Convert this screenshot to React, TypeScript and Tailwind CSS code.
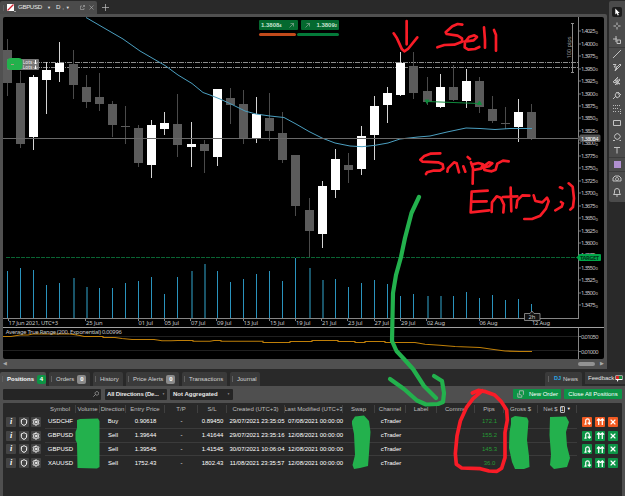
import type { ReactNode } from 'react';
import { Settings, Shield, X } from 'lucide-react';

type Candle = [high: number, top: number, bottom: number, low: number, up: 0 | 1];

const candles: Candle[] = [
  [39, 50, 83, 96, 0],
  [71, 83, 144, 148, 0],
  [75, 77, 137, 150, 1],
  [62, 70, 80, 114, 1],
  [42, 63, 72, 82, 1],
  [50, 64, 85, 99, 0],
  [75, 87, 102, 108, 0],
  [73, 97, 104, 111, 0],
  [101, 104, 125, 137, 0],
  [106, 126, 127, 144, 0],
  [125, 128, 163, 167, 0],
  [120, 125, 165, 178, 1],
  [112, 123, 129, 135, 1],
  [94, 124, 145, 157, 0],
  [122, 144, 147, 167, 1],
  [140, 144, 151, 173, 0],
  [89, 89, 157, 166, 1],
  [88, 98, 105, 124, 0],
  [90, 104, 139, 144, 0],
  [97, 114, 139, 143, 1],
  [93, 118, 131, 141, 0],
  [112, 133, 160, 163, 0],
  [155, 155, 206, 216, 0],
  [198, 210, 231, 257, 0],
  [181, 186, 234, 248, 1],
  [149, 159, 190, 198, 1],
  [153, 165, 170, 183, 0],
  [126, 136, 169, 175, 1],
  [96, 106, 135, 160, 1],
  [87, 93, 105, 123, 1],
  [52, 63, 95, 96, 1],
  [52, 66, 93, 99, 0],
  [77, 91, 102, 105, 0],
  [74, 87, 107, 108, 1],
  [65, 87, 100, 101, 0],
  [69, 81, 101, 108, 1],
  [77, 81, 107, 113, 0],
  [96, 109, 121, 123, 0],
  [107, 123, 124, 129, 0],
  [99, 112, 127, 142, 1],
  [104, 112, 139, 140, 0],
];

const volumes = [
  271, 268, 270, 285, 283, 278, 287, 288, 288, 283, 281, 277, 294, 277, 271, 264, 271, 282, 279,
  274, 271, 281, 258, 268, 280, 279, 287, 283, 280, 284, 296, 294, 296, 296, 296, 292, 298, 295,
  300, 299, 304,
];
const dimVolumes = [5, 6, 14, 15, 23, 24, 32, 33];

const dates: [number, string, number][] = [
  [8.5, '17 Jun 2021, UTC+3', 49.5],
  [86, '25 Jun', 16.5],
  [138.5, '01 Jul', 14.5],
  [164.5, '05 Jul', 14.5],
  [191, '07 Jul', 14.5],
  [217, '09 Jul', 14.5],
  [243.5, '13 Jul', 14.5],
  [270, '15 Jul', 14.5],
  [296, '19 Jul', 14.5],
  [322, '21 Jul', 14.5],
  [348, '23 Jul', 14.5],
  [374.5, '27 Jul', 14.5],
  [401, '29 Jul', 14.5],
  [427, '02 Aug', 18],
  [479.5, '06 Aug', 18],
  [532, '12 Aug', 18],
];

const candleX = (i: number) => 7.5 + i * 13.11;

const Chart = () => (
  <svg
    width="601"
    height="342"
    viewBox="3 17 601 342"
    className="block bg-black"
    fontFamily='"Noto Sans", sans-serif'
    fontSize="5.8"
    fill="#c9c9c9"
  >
    {/* order lines */}
    <path d="M3 62.5H578M3 67.5H578" stroke="#8c8c8c" strokeDasharray="5 1 1 1" fill="none" />
    <path d="M6 257.5H578" stroke="#0a6433" strokeDasharray="4 1" />

    {volumes.map((y, i) => (
      <rect
        key={i}
        x={Math.round(candleX(i) - 0.5)}
        y={y}
        width={dimVolumes.includes(i) ? 2 : 1}
        height={318 - y}
        fill={dimVolumes.includes(i) ? '#195468' : '#2a93bd'}
      />
    ))}

    {candles.map(([high, top, bottom, low, up], i) => {
      const x = Math.round(candleX(i) - 0.5);
      return (
        <g key={i} fill={up ? '#ffffff' : '#5b5b5b'}>
          <rect x={x} y={high} width="1" height={low - high} fill={up ? '#d4d4d4' : '#4a4a4a'} />
          <rect x={x - 4} y={top} width="9" height={bottom - top} />
        </g>
      );
    })}

    {/* moving average */}
    <path
      d="M86 17.5L123 39L140 51L165 65.5L178 75L192 83.5L203 92.5L210 95L220 99L232 104.5L245 111L256 114L270 116L284 117.5L296 124L309 131.5L322 138L335 143L350 146L362 146.7L375 145.3L388 143L400 139L418 137L430 136L447 132L466 128L480 128.5L495 129.5L510 128.5H532"
      fill="none"
      stroke="#4b9fc0"
      strokeWidth="1"
    />
    <path d="M3 138.5H578" stroke="#696969" />

    <g fill="#0f8a3c" stroke="#0f8a3c">
      <path d="M427 101.5L479 103.5" />
      <path d="M425 100h4l-2 3.5zM477.500 104.500h4l-2-3.500z" />
    </g>

    {/* position tag */}
    <rect x="7" y="59" width="32" height="11" rx="1" fill="#777777" />
    <g fill="#eeeeee" fontSize="4.800">
      <text x="22.800" y="64.200">Lots</text>
      <text x="22.800" y="69.200">Lots</text>
      <path
        d="M35.500 60v4m-1.500-1.500l1.500 1.500 1.500-1.500M35.500 65.500v3.500m-1.500-1.500l1.500 1.500 1.500-1.500"
        stroke="white"
        fill="none"
      />
    </g>
    <rect x="7" y="58" width="15.500" height="12" rx="4" fill="#22b14c" />
    <path d="M11 64.500h3" stroke="#a9a07c" />

    {/* pip ruler */}
    <path d="M571 23.500h3M572.500 23.500V72.500M571 72.500h3" stroke="#8c8c8c" fill="none" />
    <text transform="translate(570.500 58.500) rotate(-90)" textLength="22" fill="#9a9a9a">
      100 pips
    </text>

    {/* axes */}
    <path d="M578.500 17V318.500M578.500 328V359M3 318.500H579" stroke="#858585" fill="none" />
    <path d="M3 327.500H604" stroke="#a0a0a0" />
    {Array.from({ length: 23 }, (_, i) => {
      const y = 31.3 + i * 12.45;
      return (
        <g key={i}>
          <rect x="579" y={Math.round(y) - 0.5} width="2" height="1" fill="#777777" />
          <text x="581" y={y + 2} textLength="14.500">
            {(1.4025 - i * 0.0025).toFixed(4)}
          </text>
          <text x="595.500" y={y + 2.500} fontSize="4.200">
            0
          </text>
        </g>
      );
    })}
    <path d="M577.500 138.500l3-4h18.500q1.500 0 1.500 1.500v4.500q0 1.500-1.500 1.500h-18.500z" fill="#555555" />
    <text x="581" y="140.700" textLength="17.500" fill="white">
      1.38084
    </text>
    <path d="M576.500 257.500l3-3.500h20.500q1 0 1 1v5q0 1-1 1h-20.500z" fill="#00a548" />
    <text x="580" y="259.600" textLength="19" fill="#00351a" fontWeight="bold">
      TARGET
    </text>

    {dates.map(([x, label, width]) => (
      <g key={label}>
        <rect x={Math.round(x) - 1} y="318" width="1" height="3" fill="#858585" />
        <text x={x} y="325.200" textLength={width}>
          {label}
        </text>
      </g>
    ))}
    <path
      d="M524.500 313.500h5.500l2-2.500 2 2.500h6v7h-15.500z"
      fill="#111111"
      stroke="#9a9a9a"
      strokeWidth=".8"
    />
    <text x="528.500" y="319.200">
      2h
    </text>

    {/* average true range */}
    <path d="M3 336.500H578M3 350.500H578" stroke="#202020" />
    <path
      d="M3 336.500H11L20 335H28L33 334H70L80 335.500L84 336.500H103V337.500H115L122 338.500L132 339.500H154L162 340.800H171L178 340.500H193V341.300H210L214 340.500H221V341.300H263V342.500H290V341.500H312V340.500H338V341.500H355V342.500H365V341.500H385V342.500H415L425 344.300L440 345.300L455 346.500L480 347.500L492 349.200L505 351L520 351.500H532"
      fill="none"
      stroke="#bf7f08"
      strokeWidth="1.100"
    />
    <text x="5.800" y="334" textLength="116">
      Average True Range (200, Exponential) 0.00996
    </text>
    <path d="M579 336.500h2M579 351.500h2" stroke="#777777" />
    <text x="581" y="338.700" textLength="17.500">
      0.01050
    </text>
    <text x="581" y="353.500" textLength="17.500">
      0.01000
    </text>
  </svg>
);

const Stroke = ({ d, className }: { d: string; className?: string }) => (
  <svg
    viewBox="0 0 10 10"
    className={className ?? 'size-[10px]'}
    fill="none"
    stroke="#c2c2c2"
    strokeWidth="1"
  >
    <path d={d} />
  </svg>
);

const tools: ReactNode[] = [
  <svg viewBox="0 0 10 10" className="size-[10px] rounded-[2px] bg-[#1c1c1c]">
    <path d="M3.300 1.500v6l1.400-1.200 1 2.200 1.200-.5-1-2.100h1.800z" fill="white" />
  </svg>,
  <Stroke d="M5 1.500v2.500M5 6v2.500M1.500 5h2.500M6 5h2.500" />,
  <Stroke d="M4 1v6M1 4h4M5 5h3.500v3.500h-3.500z" />,
  <Stroke d="M1 9L9 1" />,
  <Stroke d="M1 2.500l3 0-2 2.500 3 0M3 9l1-3 4-4 1 1-4 4-2 2M4 6l1 1" />,
  <Stroke d="M1 6L6 1M2 7l6-4M3 9l5-5M1 6l7 2M5 2v7M3 4l5 4" />,
  <Stroke d="M1 9l3-3M3 5l2 3 3-2-3-4zM6 2l3 3" />,
  <svg viewBox="0 0 10 10" className="size-[10px]" fill="none" stroke="#bbbbbb">
    <path d="M1 1.500h8M1 4.500h6M1 7.500h4M6 7.500h3M8.500 5v5" strokeDasharray="1 1" />
  </svg>,
  <Stroke d="M1.500 2.500h7v5h-7z" />,
  <Stroke d="M3.200 2.700a2.800 2.800 0 1 1 0 3.600a2.800 2.800 0 0 1 0-3.600M1 8.500h2M7.500 8.500h1.500" />,
  <Stroke d="M2 2.500h6M5 2.500v6" />,
  <div className="size-[7px] bg-[#b08fd0]" />,
  <Stroke d="M1 7V4l2-2h4l2 2v3zM5 3.500a1.500 1.500 0 1 0 .1 0" />,
  <Stroke d="M1.500 7.500h7l-1-1.500V4a2.500 2.500 0 0 0-5 0v2zM4 9h2" />,
];

const DrawingTools = () => (
  <div className="mt-px flex h-[201px] w-4 flex-col rounded-l-[2px] bg-[#4b4b4b] pt-1">
    {tools.map((tool, i) => (
      <div
        key={i}
        className={`flex h-[13.850px] items-center justify-center ${
          [3, 11, 12].includes(i) ? 'border-t border-[#3b3b3b]' : ''
        }`}
      >
        {tool}
      </div>
    ))}
  </div>
);

const PriceButtons = () => (
  <div className="absolute top-[3px] left-[256px] w-20 text-[6px] font-bold text-[#c5e2cf]">
    <div className="flex gap-[3px]">
      <div className="flex h-[10px] flex-1 items-center justify-between rounded-[1px] bg-[#04692f] px-[2px]">
        <span>
          1.3808<span className="text-[4px]">4</span>
        </span>
        <Stroke className="mr-[2px] size-[5px]" d="M1 9L9 1M3 1h6v6" />
      </div>
      <div className="flex h-[10px] flex-1 items-center justify-between rounded-[1px] bg-[#04692f] px-[2px]">
        <Stroke className="ml-[2px] size-[5px]" d="M1 9L9 1M3 1h6v6" />
        <span>
          1.3809<span className="text-[4px]">2</span>
        </span>
      </div>
    </div>
    <div className="mt-[3px] flex h-[3px] gap-px">
      <div className="w-[37px] rounded-full bg-[#c24a1b]" />
      <div className="flex-1 rounded-full bg-[#047a3a]" />
    </div>
  </div>
);

const Grip = () => <div className="h-[6px] w-px bg-[#606060]" />;

const ChartTab = () => (
  <div className="mt-px flex h-[13px] w-[97px] items-center rounded-t-[2px] bg-[#4b4b4b] pl-[3px] text-[6.200px] text-[#e8e8e8]">
    <Grip />
    <svg viewBox="0 0 9 8" className="ml-[3px] h-2 w-[9px]">
      <rect width="7" height="7" fill="white" />
      <path d="M.5 6.500L6.500.5" stroke="#d11f2f" strokeWidth="1.300" />
      <path d="M8 7v1" stroke="white" />
    </svg>
    <span className="ml-[2px] w-[24px] tracking-[-0.400px]">GBPUSD</span>
    <span className="ml-[5px] text-[4px]">▼</span>
    <span className="ml-[5px] pb-px">D</span>
    <span className="ml-[2px] text-[5px]">,</span>
    <span className="ml-[2px] text-[4px]">▼</span>
    <Stroke className="ml-[10px] size-[5px]" d="M4 2h-3v7h7V6M5 5l4-4M6 1h3v3" />
    <Stroke className="ml-[4px] size-[5px]" d="M1 1l8 8M9 1l-8 8" />
  </div>
);

const Tab = ({
  label,
  badge,
  active,
  className,
}: {
  label: string;
  badge?: number;
  active?: boolean;
  className: string;
}) => (
  <div
    className={`flex items-center rounded-t-[2px] pl-[2px] ${className} ${
      active ? 'bg-[#4f4f4f] font-bold text-white' : 'bg-[#3a3a3a] text-[#d2d2d2]'
    }`}
  >
    <Grip />
    <span className="ml-[4px]">{label}</span>
    {badge !== undefined && (
      <span
        className={`ml-[3px] flex h-[9px] w-[9px] items-center justify-center rounded-[2px] font-bold text-white ${
          active ? 'bg-[#0d9444]' : 'bg-[#8a8a8a]'
        }`}
      >
        {badge}
      </span>
    )}
  </div>
);

const columns = [
  'Symbol',
  'Volume',
  'Direction',
  'Entry Price',
  'T/P',
  'S/L',
  'Created (UTC+3)',
  'Last Modified (UTC+3',
  'Swap',
  'Channel',
  'Label',
  'Comme',
  'Pips',
  'Gross $',
  'Net $',
];

const rows = [
  ['USDCHF', 'Buy', '0.90618', '0.89450', '29/07/2021 23:35:05', '07/08/2021 00:00:00', '172.1'],
  ['GBPUSD', 'Sell', '1.39644', '1.41644', '29/07/2021 23:35:16', '12/08/2021 00:00:00', '155.2'],
  ['GBPUSD', 'Sell', '1.39545', '1.41545', '30/07/2021 10:06:04', '12/08/2021 00:00:00', '145.3'],
  ['XAUUSD', 'Sell', '1752.43', '1802.43', '11/08/2021 23:35:57', '12/08/2021 00:00:00', '36.0'],
];

const gridCols =
  'grid grid-cols-[42px_31px_24px_26px_39px_33px_29px_58px_58px_32px_31px_31px_38px_29px_34px_39px_1fr] items-center text-center whitespace-nowrap';

const PositionsTable = () => (
  <div className="mx-[3px] mt-px h-[93px] rounded-t-[1px] bg-[#282828]">
    <div className={`${gridCols} h-[12px] text-[#bebebe]`}>
      <span />
      {columns.map((column) => (
        <span
          key={column}
          className={`flex h-2 items-center overflow-hidden border-r border-[#404040] ${
            column === 'Comme' ? 'justify-start pl-[8px]' : 'justify-center'
          }`}
        >
          {column}
          {column === 'Net $' && (
            <>
              <span className="ml-[2px] flex h-[7px] w-[5px] items-center justify-center rounded-[1px] border border-[#bbbbbb] text-[5px] text-white">
                1
              </span>
              <span className="ml-[2px] text-[4px] text-white">▼</span>
            </>
          )}
        </span>
      ))}
    </div>
    {rows.map(([symbol, direction, entry, stop, created, modified, pips], i) => {
      const action = `flex size-[10px] items-center justify-center rounded-[1px] ${
        i === 0 ? 'bg-[#f15a22]' : 'bg-[#0c9446]'
      }`;
      return (
        <div key={created} className={`${gridCols} h-[13.800px] text-white`}>
          <div className="flex gap-[2.700px] pl-[3px]">
            <span className="flex size-[10px] items-center justify-center rounded-[1px] bg-[#444444] font-['Liberation_Serif',serif] text-[8px] font-bold italic">
              i
            </span>
            <span className="flex size-[10px] items-center justify-center rounded-[1px] bg-[#444444]">
              <Shield className="size-[8px]" strokeWidth={3} />
            </span>
            <span className="flex size-[10px] items-center justify-center rounded-[1px] bg-[#444444]">
              <Settings className="size-[8px]" strokeWidth={3} />
            </span>
          </div>
          <div
            className={`col-span-15 grid h-full grid-cols-subgrid items-center ${
              i < 3 ? 'border-b border-[#3b3b3b]' : ''
            }`}
          >
            <span>{symbol}</span>
            <span />
            <span>{direction}</span>
            <span>{entry}</span>
            <span>-</span>
            <span>{stop}</span>
            <span className="pl-[2px]">{created}</span>
            <span className="pl-[3px]">{modified}</span>
            <span />
            <span className="pl-px">cTrader</span>
            <span />
            <span />
            <span className="text-[#259b35]">{pips}</span>
            <span />
            <span />
          </div>
          <div className="flex gap-[3px] pl-[5px]">
            <span className={action}>
              <svg
                viewBox="0 0 10 10"
                className="size-[9px]"
                fill="none"
                stroke="white"
                strokeWidth="1.300"
              >
                <path d="M3 8V4a2 2 0 0 1 4 0v3.500M5.200 6.200l1.800 1.800 1.800-1.800M1.500 8h2.500" />
              </svg>
            </span>
            <span className={action}>
              <svg
                viewBox="0 0 10 10"
                className="size-[9px]"
                fill="none"
                stroke="white"
                strokeWidth="1.400"
              >
                <path d="M3 9V2M1 4l2-2 2 2M7 9V2M5 4l2-2 2 2" />
              </svg>
            </span>
            <span className={action}>
              <X className="size-[8px] text-white" strokeWidth={3.5} />
            </span>
          </div>
        </div>
      );
    })}
  </div>
);

const PositionsPanel = () => (
  <div className="mt-[3px] text-[6px]">
    <div className="flex h-[14px] gap-[3px]">
      <Tab label="Positions" badge={4} active className="w-[46px]" />
      <Tab label="Orders" badge={0} className="w-[41px]" />
      <Tab label="History" className="w-[30px]" />
      <Tab label="Price Alerts" badge={0} className="w-[53px]" />
      <Tab label="Transactions" className="w-[45px]" />
      <Tab label="Journal" className="w-[30px]" />
      <div className="ml-auto flex w-[37px] items-center rounded-t-[2px] bg-[#3a3a3a] pl-[3px] text-[#d2d2d2]">
        <Grip />
        <span className="ml-[5px] text-[5.500px] font-bold text-[#27a9e8]">DJ</span>
        <span className="ml-[2px]">News</span>
      </div>
      <div className="mb-[2px] flex w-10 items-center bg-[#3a3a3a] pl-[3px] text-[#e4e4e4]">
        Feedback
        <svg viewBox="0 0 8 7" className="ml-px h-[7px] w-2">
          <path d="M.5.500h7v4.500h-4l-1.500 2v-2h-1.500z" fill="white" />
          <rect x="1" y="1" width="3" height="3" fill="#d92222" />
          <rect x="4" y="1" width="3" height="3" fill="#168a3c" />
        </svg>
      </div>
    </div>
    <div className="bg-[#4f4f4f]">
      <div className="flex h-[16px] items-center px-[3px]">
        <div className="flex h-[11px] w-[98px] items-center justify-end rounded-[1px] bg-[#252525] pr-[2px]">
          <Stroke className="size-[6px]" d="M6.500 1a3 3 0 1 1-.1 0M4 6L.5 9.500" />
        </div>
        <div className="ml-[4px] flex h-[11px] w-[62px] items-center justify-between rounded-[1px] bg-[#252525] px-[2px] font-bold whitespace-nowrap text-[#e8e8e8]">
          <span className="tracking-[-0.150px]">All Directions (De...</span>
          <span className="text-[3px] text-[#999999]">▼</span>
        </div>
        <div className="ml-[3px] flex h-[11px] w-[63px] items-center justify-between rounded-[1px] bg-[#252525] px-[3px] font-bold text-[#e8e8e8]">
          Not Aggregated
          <span className="text-[3px] text-[#999999]">▼</span>
        </div>
        <div className="ml-auto flex h-[10px] w-12 items-center rounded-[1px] bg-[#0c9446] pl-[4px] whitespace-nowrap text-white">
          <Stroke className="mr-[4px] size-[8px]" d="M3 1h5v5M3 1v5h2M1 4v5h5V6" />
          New Order
        </div>
        <div className="ml-[3px] flex h-[10px] w-[58px] items-center justify-center rounded-[1px] bg-[#0c9446] text-white">
          Close All Positions
        </div>
      </div>
      <PositionsTable />
    </div>
  </div>
);

// Freehand marks; the red groups are drawn on a grid three times finer than the page.
const Annotations = () => (
  <svg
    viewBox="0 0 625 496"
    className="pointer-events-none absolute inset-0 h-full w-full"
    fill="none"
    strokeLinecap="round"
    strokeLinejoin="round"
  >
    <g stroke="#f91c27" strokeWidth="8">
      <path
        transform="translate(208 0) scale(.3333)"
        d="M596 63V133M557 100L567 115L582 148L589 154L600 147L628 112"
      />
      <path
        transform="translate(415 0) scale(.3333)"
        d="M142 74L128 72L112 79L92 97L95 102L128 107L141 115L141 125L118 134L88 135L67 142M148 125L176 121L186 111L178 106L162 111L150 126L149 142L160 149L180 147L193 141M207 82L210 120L210 143M237 90L243 105L243 152"
      />
      <path
        transform="translate(415 125) scale(.3333)"
        d="M76 85L46 86L28 93L16 104L23 110L69 112L83 118L85 130L75 137L54 137L36 142L33 147M97 140L99 130L117 112L125 115L132 142M158 96L165 102M145 124L151 140M168 112L174 130L173 176M170 119L190 114L204 118L198 131L176 135M199 130L222 124L232 115L222 112L207 123L208 135L230 139L242 134L247 116L264 107L281 109M170 200L218 197M170 200L167 262M171 230L215 229M168 262L222 256M230 261L231 232L245 214L257 218L267 239L265 262M287 188L289 259M264 216L307 214M304 248L307 226L322 211L343 212M356 211L361 228L382 232L396 218L401 229L393 251L376 272L351 282L328 282M435 187L442 190M438 231L444 235L440 245L421 256M461 175L473 185L477 220L474 246L466 254"
      />
    </g>
    <g stroke="#23b14d" strokeWidth="4.200">
      <path d="M419 197L411.500 213L405 238L401 257L396 275L393 293L392 341L396.500 351L404 359L413 369L424 386L436 398" />
      <path d="M390 379L404 389L417 400.500L426 404.500L438 404L443 402L444 393L442 381L434 376" />
    </g>
    <path
      transform="translate(415 371) scale(.3333)"
      stroke="#f91c27"
      strokeWidth="11"
      d="M172 66L190 58L212 62L239 72L259 92L275 117L277 147L270 185L270 260L260 292L246 301L222 300L196 293L140 291L124 280L121 248L126 195L136 150L154 110L174 83L202 59"
    />
    <g fill="#23b14d">
      <path d="M77 420L80 419L98 418.500L99.500 421V467L97 468.500L77.500 468L77 443L75.500 440V432L77 428Z" />
      <path d="M352 421L355 416.500L364 415.500L369 421L370.500 432L369 453L368 466L360 468L354 469L352.500 465L355 455L354 434L352 424Z" />
      <path d="M511 418L515 416L527 417.500L528.500 421L527 440L529 456L529.500 467L524 469L515 469L512 462L509 448L509.500 432L511 424Z" />
      <path d="M550 417L566 416.500L569 422L566 432L567 446L570 458L567 467L554 469L550 465L551 455L549.500 435Z" />
    </g>
  </svg>
);

const App = () => (
  <div className="relative h-[496px] w-[625px] overflow-hidden bg-[#292929] font-['Liberation_Sans',Arial,sans-serif] leading-none">
    <div className="flex h-[369px] justify-between">
      <div className="w-[607px]">
        <div className="flex h-[14px] items-center">
          <ChartTab />
          <Stroke className="ml-[5px] size-[7px]" d="M5 0v10M0 5h10" />
        </div>
        <div className="h-[355px] rounded-tr-[2px] bg-[#505050] pt-[3px] pl-[3px]">
          <div className="relative w-[601px] overflow-hidden rounded-[2px]">
            <Chart />
            <PriceButtons />
          </div>
          <div className="flex h-[9px] items-center pr-[3px] text-[5px] text-[#aaaaaa]">
            <span>◀</span>
            <div className="mr-[5px] ml-auto h-[4px] w-[17px] rounded-full bg-[#929292]" />
            <span>▶</span>
          </div>
        </div>
      </div>
      <DrawingTools />
    </div>
    <PositionsPanel />
    <Annotations />
  </div>
);

export default App;
